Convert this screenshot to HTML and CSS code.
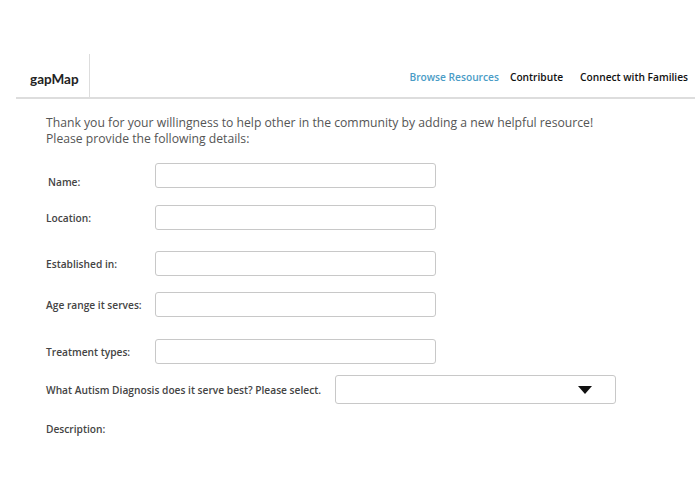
FILE: index.html
```html
<!DOCTYPE html>
<html lang="en">

<head>
    <meta charset="UTF-8">
    <title>gapMap - Contribute</title>
    <link rel="stylesheet" href="styles.css">
</head>

<body>
    <header class="topbar">
        <div class="brand">gapMap</div>
        <nav class="nav">
            <a href="#" class="nav-link active">Browse Resources</a>
            <a href="#" class="nav-link">Contribute</a>
            <a href="#" class="nav-link">Connect with Families</a>
        </nav>
    </header>

    <main class="content">
        <p class="intro">Thank you for your willingness to help other in the community by adding a new helpful resource!<br>
            Please provide the following details:</p>

        <form class="resource-form">
            <div class="row row-name">
                <label for="name">Name:</label>
                <input type="text" id="name">
            </div>
            <div class="row row-location">
                <label for="location">Location:</label>
                <input type="text" id="location">
            </div>
            <div class="row row-established">
                <label for="established">Established in:</label>
                <input type="text" id="established">
            </div>
            <div class="row row-age">
                <label for="age">Age range it serves:</label>
                <input type="text" id="age">
            </div>
            <div class="row row-treatment">
                <label for="treatment">Treatment types:</label>
                <input type="text" id="treatment">
            </div>
            <div class="row row-diagnosis">
                <label for="diagnosis">What Autism Diagnosis does it serve best? Please select.</label>
                <div class="select-box" id="diagnosis">
                    <span class="caret"></span>
                </div>
            </div>
            <div class="row row-description">
                <label>Description:</label>
            </div>
        </form>
    </main>
</body>

</html>
```

FILE: styles.css
```css
:root {
    --text: #555555;
    --label: #444444;
    --line: #dddddd;
    --border: #c8c8c8;
    --blue: #4a9cc6;
}

body {
    margin: 0;
    padding: 0;
    background: #fff;
    font-family: 'Open Sans', sans-serif;
    color: var(--text);
}

.topbar {
    display: flex;
    align-items: stretch;
    height: 43px;
    margin: 54px 0 0 16px;
    border-bottom: 2px solid var(--line);
}

.brand {
    font-family: 'Lato', sans-serif;
    font-weight: bold;
    font-size: 13.5px;
    color: #222;
    width: 74px;
    padding-left: 14px;
    padding-top: 17px;
    box-sizing: border-box;
    border-right: 1px solid var(--line);
}

.nav {
    margin-left: auto;
    display: flex;
    padding-top: 16px;
    padding-right: 7px;
}

.nav-link {
    font-size: 10.2px;
    font-weight: 600;
    color: #111;
    text-decoration: none;
    margin-left: 11px;
}

.nav-link:last-child {
    margin-left: 17px;
}

.nav-link.active {
    color: var(--blue);
}

.content {
    padding: 0 46px;
}

.intro {
    margin: 16px 0 0 0;
    font-size: 12.2px;
    line-height: 16px;
}

.row {
    display: flex;
    align-items: center;
}

.row label {
    width: 109px;
    font-size: 10.2px;
    font-weight: 600;
    color: var(--label);
}

.row input {
    width: 281px;
    height: 25px;
    box-sizing: border-box;
    border: 1px solid var(--border);
    border-radius: 3px;
    margin: 0;
}

.row-name { margin-top: 16px; }
.row-name label { margin: 6px 0 -6px 0; padding-left: 2px; width: 107px; }
.row-location { margin-top: 17px; }
.row-established { margin-top: 21px; }
.row-age { margin-top: 16px; }
.row-treatment { margin-top: 22px; }
.row-diagnosis { margin-top: 11px; }

.row-diagnosis label {
    width: auto;
    margin-right: 14px;
}

.select-box {
    width: 281px;
    height: 29px;
    box-sizing: border-box;
    border: 1px solid var(--border);
    border-radius: 3px;
    display: flex;
    align-items: center;
    justify-content: flex-end;
    padding-right: 23px;
}

.caret {
    width: 0;
    height: 0;
    border-left: 7px solid transparent;
    border-right: 7px solid transparent;
    border-top: 8px solid #111;
}

.row-description { margin-top: 18px; }
```
